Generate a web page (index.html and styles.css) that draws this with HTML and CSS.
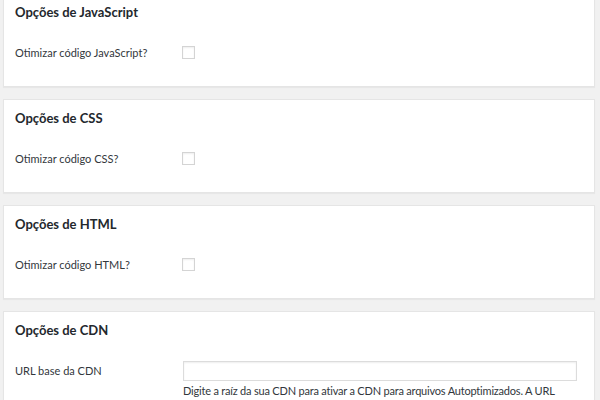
FILE: index.html
```html
<!DOCTYPE html>
<html lang="pt">
<head>
<meta charset="utf-8">
<link rel="stylesheet" href="styles.css">
</head>
<body>
<div class="wrap">
  <section class="postbox">
    <h2 class="hndle">Opções de JavaScript</h2>
    <div class="row">
      <label class="lbl">Otimizar código JavaScript?</label>
      <div class="field"><input type="checkbox" class="cb"></div>
    </div>
  </section>
  <section class="postbox">
    <h2 class="hndle">Opções de CSS</h2>
    <div class="row">
      <label class="lbl">Otimizar código CSS?</label>
      <div class="field"><input type="checkbox" class="cb"></div>
    </div>
  </section>
  <section class="postbox">
    <h2 class="hndle">Opções de HTML</h2>
    <div class="row">
      <label class="lbl">Otimizar código HTML?</label>
      <div class="field"><input type="checkbox" class="cb"></div>
    </div>
  </section>
  <section class="postbox last">
    <h2 class="hndle">Opções de CDN</h2>
    <div class="row">
      <label class="lbl">URL base da CDN</label>
      <div class="field">
        <input type="text" class="txt">
        <p class="desc">Digite a raíz da sua CDN para ativar a CDN para arquivos Autoptimizados. A URL pode ser absoluta (por exemplo: <code class="code">//cdn.exemplo.com/</code>) ou relativa ao protocolo.</p>
      </div>
    </div>
  </section>
</div>
</body>
</html>
```
FILE: styles.css
```css
html, body {
  margin: 0;
  padding: 0;
  background: #f1f1f1;
  height: 400px;
  overflow: hidden;
}
body {
  font-family: Lato, "Liberation Sans", sans-serif;
  color: #23282d;
}
.wrap {
  display: flex;
  flex-direction: column;
  gap: 12px;
  padding: 0 5px 0 3px;
  margin-top: -7px;
}
.postbox {
  background: #fff;
  border: 1px solid #e5e5e5;
  box-shadow: 0 1px 1px rgba(0,0,0,.04);
  height: 92px;
}
.postbox.last {
  height: auto;
}
.hndle {
  margin: 0;
  padding: 9px 11px 9px 11px;
  font-size: 13px;
  line-height: 19px;
  font-weight: 700;
  color: #23282d;
}
.row {
  display: grid;
  grid-template-columns: 168px 394px;
  margin-top: 12px;
  padding-left: 11px;
}
.lbl {
  font-size: 11px;
  line-height: 20px;
  color: #32373c;
}
.field {
  display: flex;
  flex-direction: column;
}
.cb {
  appearance: none;
  -webkit-appearance: none;
  margin: 3px 0 0 -1px;
  width: 13px;
  height: 13px;
  border: 1px solid #d4d4d4;
  box-shadow: inset 0 1px 2px rgba(0,0,0,.07);
  background: #fff;
  box-sizing: border-box;
}
.txt {
  box-sizing: border-box;
  width: 394px;
  height: 20px;
  margin: 0;
  border: 1px solid #dcdcdc;
  box-shadow: inset 0 1px 2px rgba(0,0,0,.07);
  background: #fff;
}
.desc {
  margin: 2px 0 0 0;
  font-size: 11px;
  line-height: 16px;
  letter-spacing: -0.2px;
  color: #32373c;
}
.code {
  font-family: "Liberation Mono", monospace;
  font-size: 10px;
  letter-spacing: 0;
  background: rgba(0,0,0,.07);
  padding: 3px 5px 2px;
}
```
